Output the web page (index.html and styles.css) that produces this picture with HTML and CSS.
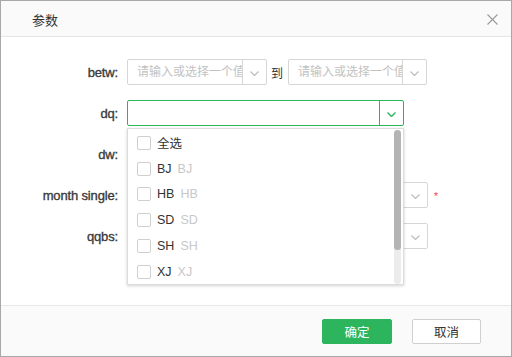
FILE: index.html
```html
<!DOCTYPE html>
<html lang="zh-CN">
<head>
    <meta charset="UTF-8">
    <title>参数</title>
    <link rel="stylesheet" href="styles.css">
</head>
<body>
    <div class="dialog">
        <div class="dialog-header">
            <span class="dialog-title">参数</span>
            <span class="dialog-close">
                <svg width="11" height="11" viewBox="0 0 11 11"><path d="M0.5 0.5 L10.5 10.5 M10.5 0.5 L0.5 10.5" stroke="#9a9a9a" stroke-width="1.1" fill="none"/></svg>
            </span>
        </div>

        <div class="dialog-body">
            <!-- betw: rango de dos valores -->
            <div class="form-row">
                <label class="form-label">betw:</label>
                <div class="select w140">
                    <div class="select-input placeholder">请输入或选择一个值</div>
                    <div class="select-arrow"><svg width="9" height="5" viewBox="0 0 9 5"><path d="M0.5 0.5 L4.5 4.5 L8.5 0.5" stroke="#bdbdbd" stroke-width="1.2" fill="none"/></svg></div>
                </div>
                <span class="range-sep">到</span>
                <div class="select w139">
                    <div class="select-input placeholder">请输入或选择一个值</div>
                    <div class="select-arrow"><svg width="9" height="5" viewBox="0 0 9 5"><path d="M0.5 0.5 L4.5 4.5 L8.5 0.5" stroke="#bdbdbd" stroke-width="1.2" fill="none"/></svg></div>
                </div>
            </div>

            <div class="form-row">
                <label class="form-label">dq:</label>
                <div class="select w276 active">
                    <div class="select-input"></div>
                    <div class="select-arrow"><svg width="9" height="5" viewBox="0 0 9 5"><path d="M0.5 0.5 L4.5 4.5 L8.5 0.5" stroke="#2db55d" stroke-width="1.4" fill="none"/></svg></div>

                    <!-- lista desplegable -->
                    <div class="dropdown">
                        <div class="option"><span class="checkbox"></span><span class="opt-text">全选</span></div>
                        <div class="option"><span class="checkbox"></span><span class="opt-text">BJ</span><span class="opt-sub">BJ</span></div>
                        <div class="option"><span class="checkbox"></span><span class="opt-text">HB</span><span class="opt-sub">HB</span></div>
                        <div class="option"><span class="checkbox"></span><span class="opt-text">SD</span><span class="opt-sub">SD</span></div>
                        <div class="option"><span class="checkbox"></span><span class="opt-text">SH</span><span class="opt-sub">SH</span></div>
                        <div class="option"><span class="checkbox"></span><span class="opt-text">XJ</span><span class="opt-sub">XJ</span></div>
                        <div class="scroll-track"><div class="scroll-thumb"></div></div>
                    </div>
                </div>
            </div>

            <div class="form-row">
                <label class="form-label">dw:</label>
                <div class="select w276">
                    <div class="select-input"></div>
                    <div class="select-arrow"></div>
                </div>
            </div>

            <div class="form-row">
                <label class="form-label">month single:</label>
                <div class="select w300">
                    <div class="select-input"></div>
                    <div class="select-arrow"><svg width="9" height="5" viewBox="0 0 9 5"><path d="M0.5 0.5 L4.5 4.5 L8.5 0.5" stroke="#bdbdbd" stroke-width="1.2" fill="none"/></svg></div>
                </div>
                <span class="required">*</span>
            </div>

            <div class="form-row">
                <label class="form-label">qqbs:</label>
                <div class="select w300">
                    <div class="select-input"></div>
                    <div class="select-arrow"><svg width="9" height="5" viewBox="0 0 9 5"><path d="M0.5 0.5 L4.5 4.5 L8.5 0.5" stroke="#bdbdbd" stroke-width="1.2" fill="none"/></svg></div>
                </div>
            </div>
        </div>

        <div class="dialog-footer">
            <button class="btn btn-primary">确定</button>
            <button class="btn">取消</button>
        </div>
    </div>
</body>
</html>
```

FILE: styles.css
```css
body {
    margin: 0;
    font-family: "Liberation Sans", Arial, "Noto Sans CJK SC", sans-serif;
    font-size: 13px;
    color: #333;
    background: #fff;
}
.dialog {
    width: 512px;
    height: 357px;
    box-sizing: border-box;
    border: 1px solid #a8a8a8;
    display: flex;
    flex-direction: column;
}
.dialog-header {
    height: 35px;
    background-color: #fafafa;
    border-bottom: 1px solid #e6e6e6;
    display: flex;
    align-items: center;
    justify-content: space-between;
    padding: 0 13px 0 31px;
}
.dialog-title {
    font-size: 13px;
    color: #333;
    padding-top: 1px;
}
.dialog-close {
    display: flex;
    padding-top: 1px;
}
.dialog-body {
    flex: 1;
    padding-top: 22px;
    display: flex;
    flex-direction: column;
    gap: 15px;
}
.form-row {
    display: flex;
    align-items: center;
    height: 26px;
}
.form-label {
    width: 117px;
    margin-right: 9px;
    text-align: right;
    color: #3a3a3a;
    font-size: 13px;
    letter-spacing: -0.15px;
    -webkit-text-stroke: 0.35px #3a3a3a;
}
.select {
    position: relative;
    display: flex;
    height: 26px;
    box-sizing: border-box;
    border: 1px solid #d6d6d6;
    border-radius: 2px;
    background: #fff;
}
.w140 { width: 140px; }
.w139 { width: 139px; }
.w276 { width: 277px; }
.w300 { width: 301px; }
.select.active {
    border-color: #2db55d;
}
.select-input {
    flex: 1;
    min-width: 0;
    overflow: hidden;
    white-space: nowrap;
    padding-left: 9px;
    line-height: 24px;
    font-size: 12px;
}
.placeholder {
    color: #c2c2c2;
}
.select-arrow {
    width: 24px;
    border-left: 1px solid #d6d6d6;
    display: flex;
    align-items: center;
    justify-content: center;
    padding-top: 2px;
    box-sizing: border-box;
}
.select.active .select-arrow {
    border-left-color: #2db55d;
}
.range-sep {
    margin: 0 5px 0 4px;
    color: #333;
    font-size: 12px;
}
.required {
    color: #f5333f;
    font-size: 10px;
    margin-left: 6px;
    margin-top: 3px;
}
.dropdown {
    position: absolute;
    top: 27px;
    left: -1px;
    width: 277px;
    height: 157px;
    box-sizing: border-box;
    border: 1px solid #dcdcdc;
    background: #fff;
    box-shadow: 0 1px 3px rgba(0, 0, 0, 0.18);
    padding-top: 1px;
    z-index: 10;
}
.option {
    height: 25.8px;
    display: flex;
    align-items: center;
    padding-left: 9px;
    font-size: 12.5px;
}
.checkbox {
    width: 12px;
    height: 12px;
    border: 1px solid #cfcfcf;
    border-radius: 2px;
    margin-right: 6px;
    background: #fff;
}
.opt-sub {
    color: #c8c8c8;
    margin-left: 6px;
}
.scroll-track {
    position: absolute;
    top: 1px;
    right: 2px;
    width: 7px;
    bottom: 0;
    background: #ececec;
    border-radius: 4px;
}
.scroll-thumb {
    height: 120px;
    background: #b4b4b4;
    border-radius: 4px;
}
.dialog-footer {
    background-color: #fafafa;
    border-top: 1px solid #e8e8e8;
    display: flex;
    justify-content: flex-end;
    align-items: flex-start;
    gap: 20px;
    padding: 13px 30px 0 0;
    box-sizing: border-box;
    height: 51px;
}
.btn {
    width: 69px;
    height: 25px;
    border: 1px solid #cfcfcf;
    border-radius: 2px;
    background: #fff;
    color: #333;
    font-family: inherit;
    font-size: 12.5px;
    padding: 0;
}
.btn-primary {
    width: 70px;
    background: #2db55d;
    border-color: #2db55d;
    color: #fff;
}
```
